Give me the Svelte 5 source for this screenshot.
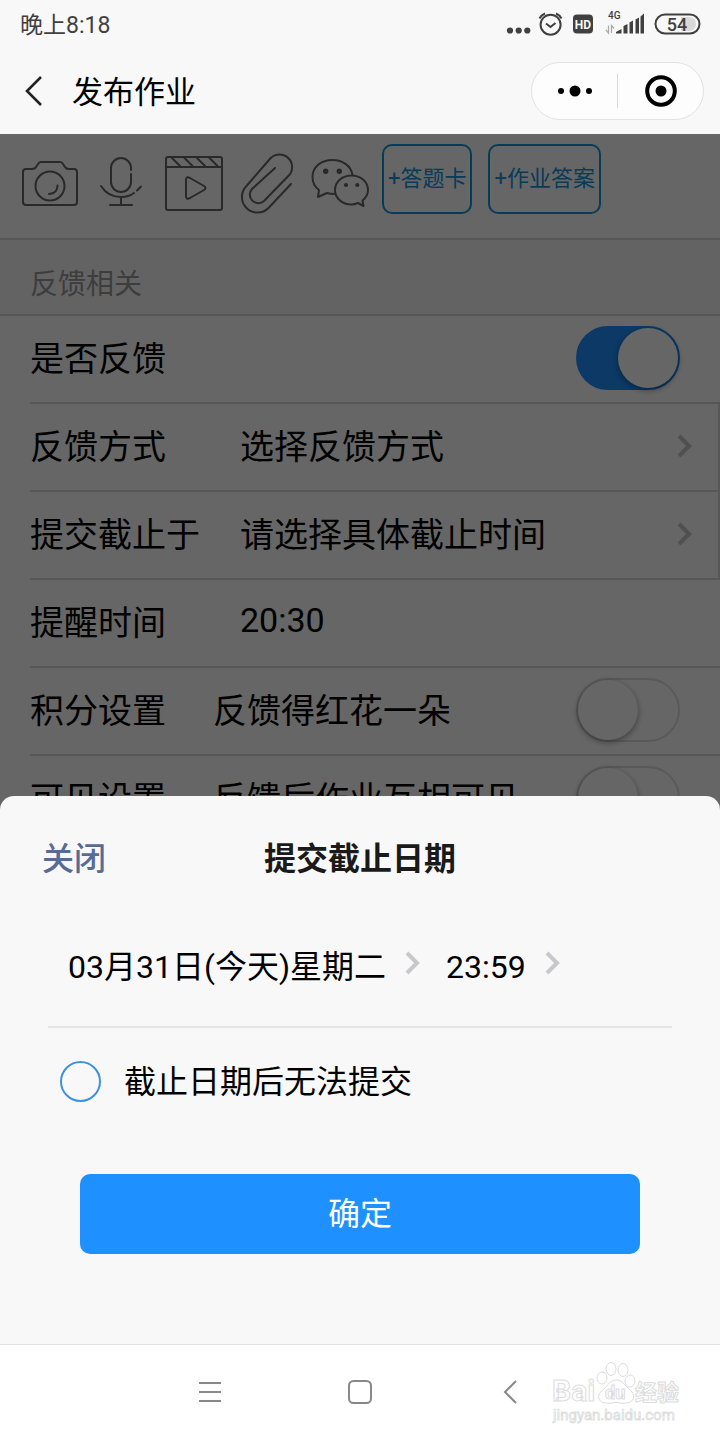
<script>
  let feedback = $state(true);
  let flower = $state(false);
  let visible = $state(false);
  let locked = $state(false);
</script>

{#snippet chevron()}
  <svg class="chevron" viewBox="0 0 16 24" aria-hidden="true"><path d="M3 2l10 10L3 22" /></svg>
{/snippet}

<div class="page">
  <header>
    <div class="status">
      <span>晚上8:18</span>
      <svg viewBox="503 8 200 32" width="200" height="32" aria-hidden="true">
        <g fill="#404040">
          <circle cx="510" cy="30.500" r="3.100" /><circle cx="518.700" cy="30.500" r="3.100" /><circle cx="527.300" cy="30.500" r="3.100" />
          <rect x="573" y="14.500" width="20" height="19" rx="4" />
          <path d="M616 33.500h5.500v-4.500l-5.500 3zM623.500 33.500v-7.500l4-2v9.500zM629.500 33.500v-11l3.500-2v13zM635.500 33.500v-14l3.500-2v16zM640.500 33.500v-17l3.500-3v20z" />
          <text x="608" y="19" font-size="10" font-weight="500">4G</text>
        </g>
        <g fill="none" stroke="#404040" stroke-width="2">
          <circle cx="550.600" cy="24.700" r="10" />
          <path d="M546 23.500l4.500 3.500 5-4M539.500 18.500q2-3.500 5.500-5M561.500 18.500q-2-3.500-5.500-5" />
        </g>
        <path d="M608.500 25.500v7.500l-2.500-3M611.500 33v-7.500l2.500 3" fill="none" stroke="#aaa" stroke-width="1.200" />
        <text x="583" y="28.500" font-size="12" font-weight="700" fill="#f8f8f8" text-anchor="middle">HD</text>
        <path d="M681 17h8a7 7 0 0 1 0 14h-8z" fill="#d8d8d8" />
        <rect x="655.500" y="14.500" width="44" height="19" rx="9.500" fill="none" stroke="#404040" stroke-width="2" />
        <text x="677" y="30.500" font-size="18" font-weight="500" fill="#404040" text-anchor="middle">54</text>
      </svg>
    </div>
    <div class="titlebar">
      <button class="back" aria-label="返回">
        <svg viewBox="0 0 20 32" width="20" height="32"><path d="M17 2L3 16l14 14" fill="none" stroke="#222" stroke-width="2.600" /></svg>
      </button>
      <h1>发布作业</h1>
      <div class="capsule">
        <button aria-label="更多">
          <svg viewBox="0 0 36 12" width="36" height="12"><circle cx="4" cy="6" r="3" /><circle cx="18" cy="6" r="5.500" /><circle cx="32" cy="6" r="3" /></svg>
        </button>
        <button aria-label="关闭小程序">
          <svg viewBox="0 0 34 34" width="34" height="34"><circle cx="17" cy="17" r="13.800" fill="none" stroke="#000" stroke-width="4" /><circle cx="17" cy="17" r="5.500" /></svg>
        </button>
      </div>
    </div>
  </header>

  <main>
    <form class="form" onsubmit={(e) => e.preventDefault()}>
      <div class="tools">
        <button type="button" class="tool" aria-label="拍照">
          <svg viewBox="0 0 62 70" width="62" height="70">
            <path d="M6 25h6q3 0 4-2l2-3q1-2 3-2h19q2 0 3 2l2 3q1 2 4 2h5q3 0 3 3v30q0 3-3 3H6q-3 0-3-3V28q0-3 3-3z" />
            <circle cx="30" cy="42" r="14.500" /><path d="M37.500 41.500q0 8-8.500 8.500" />
          </svg>
        </button>
        <button type="button" class="tool" aria-label="录音">
          <svg viewBox="0 0 54 70" width="54" height="70">
            <path d="M37 26v-2a10 10 0 0 0-20 0v14a10 10 0 0 0 20 0v-8M7 42q7 11 20 11q8 0 13-4M43 46.500l4-4M27 53v8M16 61h22" />
          </svg>
        </button>
        <button type="button" class="tool" aria-label="视频">
          <svg viewBox="0 0 66 70" width="66" height="70">
            <rect x="6" y="13" width="56" height="53" rx="2" />
            <path d="M6 23h56M12 14l8 8M24.500 14l8 8M37 14l8 8M49.500 14l8 8M26 36q0-4 4-2l14 8q3 2 0 4l-14 8q-4 2-4-2z" />
          </svg>
        </button>
        <button type="button" class="tool" aria-label="附件">
          <svg viewBox="0 0 58 70" width="58" height="70">
            <path d="M53 40L30.500 64A15.500 15.500 0 0 1 8.500 42L32.700 14A12.500 12.500 0 0 1 50.300 32L26 57A8.500 8.500 0 0 1 14 45L37 24" />
          </svg>
        </button>
        <button type="button" class="tool" aria-label="微信">
          <svg viewBox="0 0 62 70" width="62" height="70">
            <path d="M27 50q-5 0-8-1l-9 4 1-7C7 43 4.500 38 4.500 33C4.500 23 13 16 24.500 16C35 16 43 22 44.500 31M55.500 62L50 59q-3 1.500-6.500 1.500C34 60.500 27 54 27 46S34 31.500 43.500 31.500S60 38 60 46q0 6-5.500 10.500z" />
            <g class="eyes"><circle cx="17.700" cy="27.300" r="2.700" /><circle cx="31.300" cy="27.300" r="2.700" /><circle cx="38" cy="41" r="2.100" /><circle cx="49.300" cy="41" r="2.100" /></g>
          </svg>
        </button>
        <div class="adds">
          <button type="button" class="add">+答题卡</button>
          <button type="button" class="add">+作业答案</button>
        </div>
      </div>

      <h2>反馈相关</h2>

      <div class="rows">
        <label class="row"><span class="key">是否反馈</span><input class="switch" type="checkbox" role="switch" bind:checked={feedback} /></label>
        <button type="button" class="row picker"><span class="key">反馈方式</span><span class="value">选择反馈方式</span>{@render chevron()}</button>
        <button type="button" class="row picker"><span class="key">提交截止于</span><span class="value">请选择具体截止时间</span>{@render chevron()}</button>
        <div class="row"><span class="key">提醒时间</span><span class="value">20:30</span></div>
        <label class="row toggle"><span class="key">积分设置</span><span class="value">反馈得红花一朵</span><input class="switch" type="checkbox" role="switch" bind:checked={flower} /></label>
        <label class="row toggle"><span class="key">可见设置</span><span class="value">反馈后作业互相可见</span><input class="switch" type="checkbox" role="switch" bind:checked={visible} /></label>
      </div>
    </form>

    <div class="mask"></div>

    <section class="sheet" role="dialog" aria-labelledby="sheet-title">
      <div class="sheet-head">
        <button class="close">关闭</button>
        <h3 id="sheet-title">提交截止日期</h3>
      </div>
      <div class="when">
        <button>03月31日(今天)星期二{@render chevron()}</button>
        <button>23:59{@render chevron()}</button>
      </div>
      <label class="lock"><input type="checkbox" bind:checked={locked} /><span>截止日期后无法提交</span></label>
      <button class="confirm">确定</button>
    </section>
  </main>

  <nav>
    <button aria-label="菜单"><svg viewBox="0 0 28 28" width="28" height="28"><path d="M3 5h22M3 14h22M3 23h22" /></svg></button>
    <button aria-label="主页"><svg viewBox="0 0 28 28" width="28" height="28"><rect x="3" y="3" width="22" height="22" rx="4.500" /></svg></button>
    <button aria-label="后退"><svg viewBox="0 0 28 28" width="28" height="28"><path d="M20 3L9 14l11 11" /></svg></button>
    <svg class="mark" viewBox="0 0 132 66" width="132" height="66" aria-hidden="true">
      <g fill="#fff" stroke="#dcdcdc" stroke-width="1">
        <text x="0" y="41" font-size="30" font-weight="700">Bai</text>
        <ellipse cx="50" cy="18" rx="5" ry="6" /><ellipse cx="59" cy="9" rx="5" ry="6.500" /><ellipse cx="71" cy="10" rx="5" ry="6.500" /><ellipse cx="78" cy="21" rx="5" ry="6" />
        <path d="M64 20C57 20 56 26 52 29C44 34 45 43 55 43Q59 44 64 42Q69 44 73 43C83 43 84 34 77 29C73 26 71 20 64 20z" />
        <text x="53" y="39" font-size="18" font-weight="700">du</text>
        <text x="83" y="40" font-size="22" font-weight="700">经验</text>
        <text x="1" y="60" font-size="15" stroke-width="0.800">jingyan.baidu.com</text>
      </g>
    </svg>
  </nav>
</div>

<style>
  :global(body) {
    margin: 0;
    background: #f8f8f8;
  }
  * {
    box-sizing: border-box;
  }
  button {
    border: 0;
    padding: 0;
    background: none;
    font: inherit;
    color: inherit;
    cursor: pointer;
  }
  svg {
    display: block;
    flex: none;
  }
  .page {
    display: flex;
    flex-direction: column;
    height: 100vh;
    font-family: Roboto, "Noto Sans CJK SC", sans-serif;
    color: #000;
    background: #f8f8f8;
  }
  .status {
    display: flex;
    align-items: center;
    justify-content: space-between;
    height: 48px;
    padding: 0 17px 2px 20px;
    font-size: 23px;
    color: #404040;
  }
  .status svg {
    margin-top: 2px;
  }
  .titlebar {
    display: flex;
    align-items: center;
    height: 86px;
    padding: 0 16px 0 24px;
  }
  .back {
    width: 48px;
  }
  h1 {
    flex: 1;
    margin: 0;
    padding-bottom: 4px;
    font-size: 31px;
    font-weight: 400;
  }
  .capsule {
    display: flex;
    align-items: center;
    width: 173px;
    height: 58px;
    border: 1px solid #e2e2e2;
    border-radius: 29px;
    background: #fdfdfd;
  }
  .capsule button {
    display: grid;
    place-items: center;
    flex: 1;
    height: 34px;
  }
  .capsule button + button {
    border-left: 1px solid #d8d8d8;
  }
  main {
    position: relative;
    flex: 1;
    min-height: 0;
    overflow: hidden;
    background: #fff;
  }
  .tools {
    display: flex;
    gap: 12px;
    padding: 10px 20px 24px;
  }
  .tool svg {
    fill: none;
    stroke: #666;
    stroke-width: 2;
    stroke-linecap: round;
    stroke-linejoin: round;
  }
  .tool .eyes {
    fill: #666;
    stroke: none;
  }
  .adds {
    display: flex;
    gap: 16px;
  }
  .add {
    height: 70px;
    padding: 0 4px 6px;
    border: 2px solid #1296db;
    border-radius: 10px;
    font-size: 22px;
    color: #1296db;
    white-space: nowrap;
  }
  h2 {
    margin: 0;
    padding: 16px 30px 0;
    border: solid #d9d9d9;
    border-width: 2px 0;
    font-size: 28px;
    line-height: 58px;
    font-weight: 400;
    color: #999;
    background: #f8f8f8;
  }
  .rows {
    padding-left: 30px;
  }
  .row {
    display: flex;
    align-items: center;
    width: 100%;
    height: 88px;
    padding-right: 40px;
    border-bottom: 2px solid #d9d9d9;
    font-size: 34px;
    text-align: left;
    white-space: nowrap;
  }
  .picker {
    padding-right: 26px;
    border-right: 2px solid #d9d9d9;
  }
  .key,
  .value {
    padding-bottom: 6px;
  }
  .key {
    width: 210px;
  }
  .toggle .key {
    width: 183px;
  }
  .value {
    flex: 1;
  }
  .chevron {
    width: 16px;
    height: 24px;
    margin-bottom: 2px;
    fill: none;
    stroke: #c8c8cc;
    stroke-width: 4;
  }
  .switch {
    appearance: none;
    flex: none;
    width: 104px;
    height: 64px;
    margin: 0 0 2px auto;
    border: 2px solid #dfdfdf;
    border-radius: 32px;
    background: #fff;
  }
  .switch::before {
    content: "";
    display: block;
    width: 60px;
    height: 60px;
    border-radius: 50%;
    background: #fff;
    box-shadow: 0 2px 6px rgba(0, 0, 0, 0.4);
  }
  .switch:checked {
    border-color: #1e90ff;
    background: #1e90ff;
  }
  .switch:checked::before {
    margin-left: auto;
  }
  .mask {
    position: absolute;
    inset: 0;
    background: rgba(0, 0, 0, 0.6);
  }
  .sheet {
    position: absolute;
    left: 0;
    right: 0;
    bottom: 0;
    padding: 0 48px 90px;
    border-radius: 14px 14px 0 0;
    font-size: 32px;
    background: #f8f8f8;
  }
  .sheet-head {
    display: grid;
    grid-template-columns: 1fr auto 1fr;
    align-items: center;
    height: 124px;
    margin: 0 -6px;
    padding-bottom: 4px;
    font-weight: 700;
  }
  .close {
    justify-self: start;
    font-weight: 500;
    color: #576b95;
  }
  h3 {
    margin: 0;
    font-size: 32px;
    color: #1a1a1a;
  }
  .when {
    display: flex;
    align-items: baseline;
    gap: 26px;
    height: 108px;
    padding: 23px 20px 0;
    border-bottom: 2px solid #e5e5e5;
    line-height: 48px;
  }
  .when button {
    display: flex;
    align-items: baseline;
    gap: 18px;
    white-space: nowrap;
  }
  .when .chevron {
    align-self: center;
    margin-bottom: 8px;
  }
  .lock {
    display: flex;
    align-items: center;
    gap: 23px;
    height: 106px;
    padding-left: 12px;
  }
  .lock span {
    padding-bottom: 5px;
  }
  .lock input {
    appearance: none;
    width: 41px;
    height: 41px;
    margin: 0;
    border: 2px solid #3c92dc;
    border-radius: 50%;
  }
  .lock input:checked {
    background: #3c92dc;
  }
  .confirm {
    display: block;
    width: calc(100% - 64px);
    height: 80px;
    margin: 40px auto 0;
    padding-bottom: 6px;
    border-radius: 10px;
    color: #fff;
    background: #1e90ff;
  }
  nav {
    position: relative;
    display: flex;
    justify-content: center;
    height: 96px;
    padding-bottom: 2px;
    border-top: 1px solid #e2e2e2;
    background: #fff;
  }
  nav button {
    display: grid;
    place-items: center;
    width: 150px;
  }
  nav button svg {
    fill: none;
    stroke: #888;
    stroke-width: 2;
  }
  .mark {
    position: absolute;
    right: 36px;
    bottom: 14px;
  }
</style>
